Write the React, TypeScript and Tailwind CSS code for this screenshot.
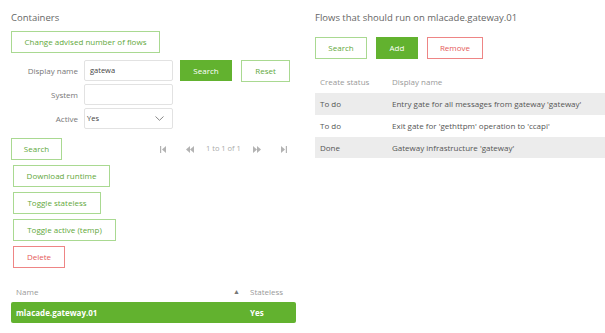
import React from "react";

const font = { fontFamily: '"Open Sans", "Noto Sans", sans-serif' };

function OutlineBtn({ children, w, red }: { children: React.ReactNode; w: string; red?: boolean }) {
  return (
    <button
      className={
        "block h-[22px] shrink-0 border bg-white text-[8px] leading-none " +
        w +
        (red ? " border-[#ee8585] text-[#e55a5a]" : " border-[#a9d991] text-[#5fa83b]")
      }
    >
      {children}
    </button>
  );
}

function FirstIcon() {
  return (
    <svg width="6" height="7" viewBox="0 0 6 7">
      <rect x="0" y="0" width="1.2" height="7" fill="#b3b3b3" />
      <path d="M6 0 L2 3.5 L6 7 Z" fill="#b3b3b3" />
    </svg>
  );
}
function PrevIcon() {
  return (
    <svg width="8" height="7" viewBox="0 0 8 7">
      <path d="M4 0 L0 3.5 L4 7 Z" fill="#b3b3b3" />
      <path d="M8 0 L4 3.5 L8 7 Z" fill="#b3b3b3" />
    </svg>
  );
}
function NextIcon() {
  return (
    <svg width="8" height="7" viewBox="0 0 8 7">
      <path d="M0 0 L4 3.5 L0 7 Z" fill="#b3b3b3" />
      <path d="M4 0 L8 3.5 L4 7 Z" fill="#b3b3b3" />
    </svg>
  );
}
function LastIcon() {
  return (
    <svg width="6" height="7" viewBox="0 0 6 7">
      <path d="M0 0 L4 3.5 L0 7 Z" fill="#b3b3b3" />
      <rect x="4.8" y="0" width="1.2" height="7" fill="#b3b3b3" />
    </svg>
  );
}

export default function App() {
  return (
    <div className="flex h-[333px] w-[605px] bg-white text-[#555]" style={font}>
      {/* Left column */}
      <div className="flex w-[304px] flex-col pl-[11px] pt-[11px]">
        <div className="h-[14px] text-[9.5px] leading-[14px] text-[#666]">Containers</div>
        <div className="mt-[6px] flex">
          <OutlineBtn w="w-[149px]">Change advised number of flows</OutlineBtn>
        </div>

        <div className="mt-[7px] flex flex-col gap-[3px]">
          <div className="flex h-[21px] items-center">
            <div className="w-[67px] text-right text-[8px] text-[#777]">Display name</div>
            <div className="ml-[6px] flex h-[21px] w-[89px] items-center rounded-[2px] border border-[#e2e2e2] pl-[5px] text-[7.5px] text-[#444]">
              gatewa
            </div>
            <button className="ml-[7px] block h-[21px] w-[52px] bg-[#62b22f] text-[8px] leading-none text-white">Search</button>
            <div className="ml-[9px] flex">
              <OutlineBtn w="w-[49px]">Reset</OutlineBtn>
            </div>
          </div>
          <div className="flex h-[21px] items-center">
            <div className="w-[67px] text-right text-[8px] text-[#777]">System</div>
            <div className="ml-[6px] h-[21px] w-[89px] rounded-[2px] border border-[#e2e2e2]" />
          </div>
          <div className="flex h-[21px] items-center">
            <div className="w-[67px] text-right text-[8px] text-[#777]">Active</div>
            <div className="ml-[6px] flex h-[21px] w-[89px] items-center justify-between rounded-[2px] border border-[#e2e2e2] pl-[2px] pr-[8px] text-[7.5px] text-[#444]">
              <span>Yes</span>
              <svg width="9" height="5" viewBox="0 0 9 5">
                <path d="M0.5 0.5 L4.5 4.3 L8.5 0.5" fill="none" stroke="#888" strokeWidth="1" />
              </svg>
            </div>
          </div>
        </div>

        <div className="mt-[9px] flex items-center">
          <OutlineBtn w="w-[51px]">Search</OutlineBtn>
          <div className="ml-[98px] flex items-center text-[7.5px] text-[#aaa]">
            <FirstIcon />
            <span className="ml-[20px]"><PrevIcon /></span>
            <span className="ml-[12px]">1 to 1 of 1</span>
            <span className="ml-[12px]"><NextIcon /></span>
            <span className="ml-[20px]"><LastIcon /></span>
          </div>
        </div>

        <div className="ml-[2px] mt-[5px] flex flex-col items-start gap-[5px]">
          <OutlineBtn w="w-[97px]">Download runtime</OutlineBtn>
          <OutlineBtn w="w-[88px]">Toggle stateless</OutlineBtn>
          <OutlineBtn w="w-[103px]">Toggle active (temp)</OutlineBtn>
          <OutlineBtn w="w-[52px]" red>Delete</OutlineBtn>
        </div>

        <div className="mt-[15px] flex h-[18px] w-[285px] items-center text-[8px] text-[#999]">
          <span className="ml-[5px] flex-1">Name</span>
          <span className="mr-[10px] text-[7px] text-[#777]">▲</span>
          <span className="w-[46px]">Stateless</span>
        </div>
        <div className="mt-[1px] flex h-[21px] w-[285px] items-center rounded-[2px] bg-[#62b22f] text-[8px] font-bold text-white">
          <span className="ml-[5px] flex-1">mlacade.gateway.01</span>
          <span className="w-[46px]">Yes</span>
        </div>
      </div>

      {/* Right column */}
      <div className="flex flex-1 flex-col pl-[11px] pt-[11px]">
        <div className="h-[14px] text-[9.5px] leading-[14px] text-[#666]">Flows that should run on mlacade.gateway.01</div>
        <div className="mt-[12px] flex items-center gap-[9px]">
          <OutlineBtn w="w-[52px]">Search</OutlineBtn>
          <button className="block h-[22px] w-[42px] bg-[#62b22f] text-[8px] leading-none text-white">Add</button>
          <OutlineBtn w="w-[56px]" red>Remove</OutlineBtn>
        </div>
        <div className="mt-[12px] flex h-[22px] items-center text-[8px] text-[#999]">
          <span className="ml-[5px] w-[72px]">Create status</span>
          <span>Display name</span>
        </div>
        <div className="flex flex-col text-[8px] text-[#555]">
          <div className="flex h-[22px] items-center bg-[#ececec]">
            <span className="ml-[5px] w-[72px]">To do</span>
            <span>Entry gate for all messages from gateway 'gateway'</span>
          </div>
          <div className="flex h-[22px] items-center bg-white">
            <span className="ml-[5px] w-[72px]">To do</span>
            <span>Exit gate for 'gethttpm' operation to 'ccapi'</span>
          </div>
          <div className="flex h-[21px] items-center bg-[#ececec]">
            <span className="ml-[5px] w-[72px]">Done</span>
            <span>Gateway infrastructure 'gateway'</span>
          </div>
        </div>
      </div>
    </div>
  );
}
